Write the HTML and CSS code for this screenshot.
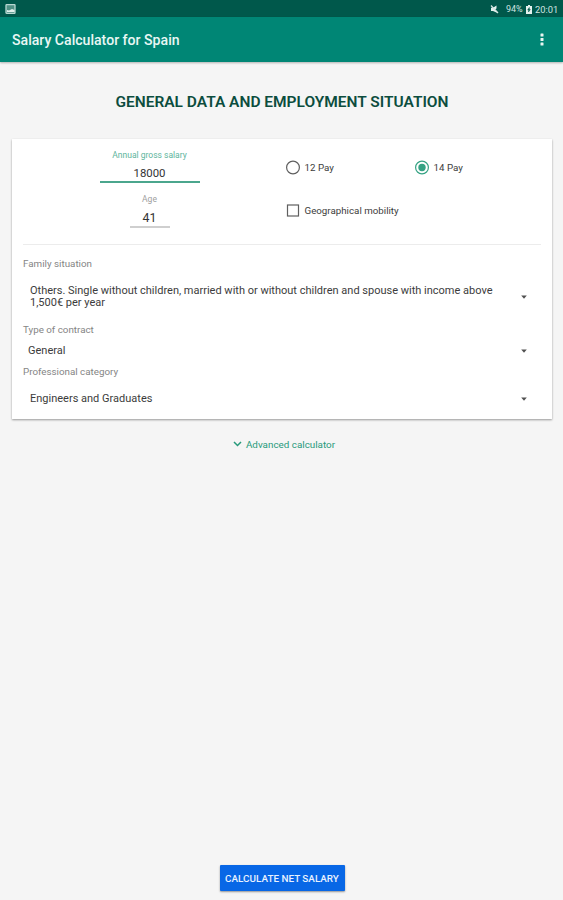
FILE: index.html
```html
<!DOCTYPE html>
<html lang="en">
<head>
<meta charset="utf-8">
<title>Salary Calculator for Spain</title>
<link rel="stylesheet" href="styles.css">
</head>
<body>
<div class="status">
  <svg class="picture" width="11" height="10" viewBox="0 0 11 10"><rect x="1" y=".7" width="9" height="8.600" rx=".6" fill="#4f9084" stroke="#b9d8d2" stroke-width="1.300"/><path d="M2 8V6l2 .5L7 5l2.500 1v2z" fill="#e2f0ed"/></svg>
  <svg class="mute" width="9" height="9" viewBox="0 0 9 9"><path d="M1 2.800h2L6.500.5v3L5 4.500l2.500 3.500L3 5.900H1z" fill="#e4f1ee"/><path d="M1 .5l7 7.500" stroke="#d5e7e3" stroke-width="1.200"/></svg>
  <span class="percent">94%</span>
  <svg class="battery" width="6" height="9" viewBox="0 0 6 9"><path d="M2 0h2v1h2v8H0V1h2z" fill="#e4f1ee"/><path d="M3.300 2.500L1.700 5h1l-.2 2L4.300 4.500h-1z" fill="#00584b" stroke="#00584b" stroke-width=".5"/></svg>
  <span class="clock">20:01</span>
</div>
<header class="appbar">
  <h1 class="app-title">Salary Calculator for Spain</h1>
  <svg class="more" width="4" height="13" viewBox="0 0 4 13" fill="#e9f5f2"><rect x=".5" y=".5" width="3" height="3" rx=".5"/><rect x=".5" y="5" width="3" height="3" rx=".5"/><rect x=".5" y="9.500" width="3" height="3" rx=".5"/></svg>
</header>
<main class="content">
  <h2 class="heading"><span>GENERAL DATA AND EMPLOYMENT SITUATION</span></h2>
  <section class="card">
    <div class="basics">
      <div class="inputs">
        <span class="label active">Annual gross salary</span>
        <span class="value salary">18000</span>
        <span class="label age-label">Age</span>
        <span class="value age">41</span>
      </div>
      <div class="options">
        <div class="option">
          <svg width="16" height="16" viewBox="0 0 16 16"><circle cx="8" cy="8.500" r="6.400" fill="none" stroke="#5f5f5f" stroke-width="1.200"/></svg>
          <span class="pay12">12 Pay</span>
        </div>
        <div class="option">
          <svg width="16" height="16" viewBox="0 0 16 16"><circle cx="8" cy="8.500" r="6.400" fill="none" stroke="#35a283" stroke-width="1.200"/><circle cx="8" cy="8.500" r="3.700" fill="#35a283"/></svg>
          <span class="pay14">14 Pay</span>
        </div>
        <div class="option mobility">
          <svg width="16" height="16" viewBox="0 0 16 16"><rect x="2.500" y="3" width="11" height="11" fill="none" stroke="#5f5f5f" stroke-width="1.200"/></svg>
          <span class="geo">Geographical mobility</span>
        </div>
      </div>
    </div>
    <div class="selects">
      <div class="select-label"><span>Family situation</span></div>
      <div class="select family"><span class="text">Others. Single without children, married with or without children and spouse with income above<br>1,500€ per year</span><svg width="6" height="4" viewBox="0 0 6 4"><path d="M.2.500h5.600L3 3.700z" fill="#505050"/></svg></div>
      <div class="select-label"><span>Type of contract</span></div>
      <div class="select contract"><span class="text">General</span><svg width="6" height="4" viewBox="0 0 6 4"><path d="M.2.500h5.600L3 3.700z" fill="#505050"/></svg></div>
      <div class="select-label"><span>Professional category</span></div>
      <div class="select category"><span class="text">Engineers and Graduates</span><svg width="6" height="4" viewBox="0 0 6 4"><path d="M.2.500h5.600L3 3.700z" fill="#505050"/></svg></div>
    </div>
  </section>
  <div class="advanced">
    <svg width="9" height="6" viewBox="0 0 9 6"><path d="M1 1l3.500 3.500L8 1" fill="none" stroke="#279a7b" stroke-width="1.500"/></svg>
    <span>Advanced calculator</span>
  </div>
</main>
<footer class="footer"><button class="calculate">CALCULATE NET SALARY</button></footer>
</body>
</html>
```
FILE: styles.css
```css
* { box-sizing: border-box; }
body {
  margin: 0;
  height: 900px;
  display: flex;
  flex-direction: column;
  background: #f5f5f5;
  color: #3c3c3c;
  font-family: Roboto, "Liberation Sans", sans-serif;
  font-size: 10px;
  white-space: nowrap;
  overflow: hidden;
}
svg { display: block; flex: none; }
.status {
  height: 17px;
  padding: 1px 6px 0 5px;
  display: flex;
  align-items: center;
  background: #00584b;
  color: #d0e4e0;
}
.mute { margin-left: auto; margin-right: 7px; }
.percent { font-size: 9px; width: 17px; margin-right: 3px; }
.battery { margin-right: 3px; }
.clock { font-size: 9.3px; width: 22px; }
.appbar {
  height: 45px;
  padding: 0 19px 0 12px;
  display: flex;
  align-items: center;
  justify-content: space-between;
  background: #008675;
  box-shadow: 0 1px 2px rgba(0, 0, 0, .28);
}
.app-title { margin: 0; color: #e9f7f4; font-size: 14.1px; font-weight: 500; }
.content { flex: 1; padding: 0 11px 0 12px; }
.heading {
  height: 77px;
  margin: 0;
  padding-top: 2px;
  display: flex;
  align-items: center;
  justify-content: center;
  color: #0c4d3e;
  font-size: 15.49px;
  font-weight: 600;
}
.card {
  height: 280px;
  padding: 0 11px;
  background: #fff;
  box-shadow: 0 1px 2px rgba(0, 0, 0, .38);
}
.basics {
  height: 106px;
  display: flex;
  border-bottom: 1px solid #ececec;
}
.inputs {
  width: 253px;
  padding-top: 10px;
  display: flex;
  flex-direction: column;
  align-items: center;
}
.label { height: 13px; line-height: 13px; font-size: 8.5px; color: #a0a0a0; }
.label.active { color: #5eb59d; }
.value { text-align: center; color: #333; }
.salary { width: 100px; height: 21px; line-height: 23px; font-size: 11.4px; border-bottom: 2px solid #4ba68d; }
.age-label { margin-top: 10px; }
.age { width: 40px; height: 22px; line-height: 24px; font-size: 12.3px; border-bottom: 2px solid #cfcfcf; }
.options {
  flex: 1;
  padding: 20px 0 0 9px;
  display: grid;
  grid-template-columns: 129px 1fr;
  grid-template-rows: 16px 16px;
  row-gap: 27px;
}
.option { display: flex; align-items: center; gap: 3.5px; font-size: 9.75px; }
.mobility { grid-column: 1 / -1; }
.select-label { height: 13px; line-height: 13px; color: #858585; font-size: 9.8px; }
.selects { padding-top: 12px; }
.select {
  display: flex;
  align-items: center;
  justify-content: space-between;
  padding: 0 14px 0 7px;
  font-size: 11px;
  line-height: 12.5px;
}
.text { padding-top: 1px; }
.family { height: 53px; }
.contract { height: 29px; padding-left: 5px; }
.category { height: 41px; }
.advanced {
  height: 50px;
  padding-left: 4px;
  display: flex;
  align-items: center;
  justify-content: center;
  gap: 4px;
  color: #279a7b;
  font-size: 9.85px;
}
.footer { height: 35px; padding-left: 1px; display: flex; justify-content: center; }
.calculate {
  width: 125px;
  height: 26px;
  padding: 0;
  border: 0;
  border-radius: 1px;
  background: #0867e6;
  box-shadow: 0 1px 2px rgba(0, 0, 0, .4);
  color: #e8f2ff;
  font: 500 9.9px Roboto, "Liberation Sans", sans-serif;
}
```
